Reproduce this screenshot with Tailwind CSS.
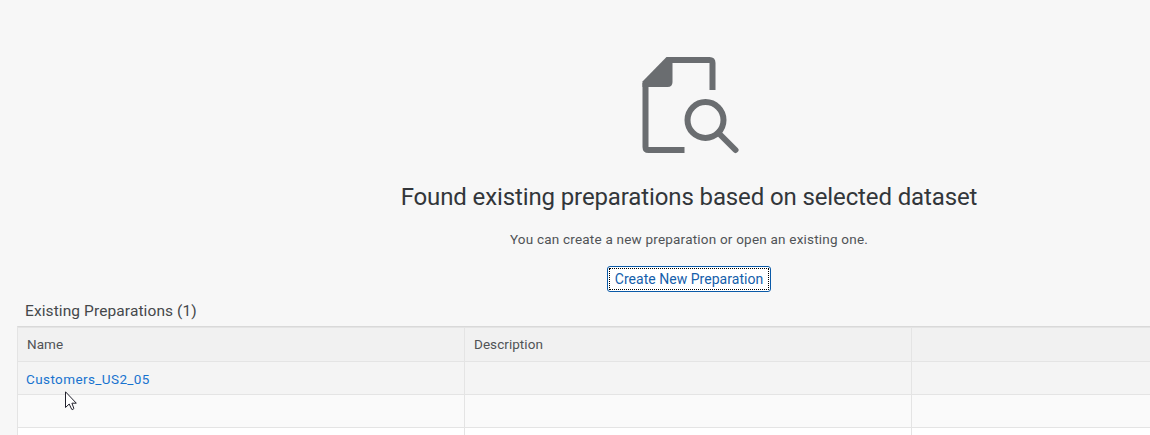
<!DOCTYPE html>
<html lang="en">
<head>
<meta charset="utf-8">
<title>Preparations</title>
<script src="https://cdn.jsdelivr.net/npm/@tailwindcss/browser@4"></script>
</head>
<body class="relative h-[435px] w-[1150px] overflow-hidden bg-[#f7f7f7] font-[Roboto,sans-serif] text-sm text-[#45484b]">
  <section class="ml-[228px] flex w-[922px] flex-col items-center pt-14">
    <svg class="ml-0.5 h-[98px] w-[98px]" viewBox="0 0 98 98" fill="none" stroke="#6a6d70" stroke-width="6">
      <path d="M4.500 27V91Q4.500 94 7.500 94H43.500M26 4H68.500Q71.500 4 71.500 7V34"/>
      <path d="M25.500 1H31.500V26Q31.500 31 26.500 31H1.500V25.500Z" fill="#6a6d70" stroke="none"/>
      <circle cx="64.500" cy="64" r="18"/>
      <path d="M77.500 77L94.500 94" stroke-linecap="round"/>
    </svg>
    <h1 class="mt-[27px] whitespace-nowrap text-2xl leading-8 tracking-[-0.12px] text-[#32363a]">Found existing preparations based on selected dataset</h1>
    <p class="mt-4 whitespace-nowrap text-[13.5px] leading-5 tracking-[0.21px] text-[#505356]">You can create a new preparation or open an existing one.</p>
    <button class="mt-[17px] h-[26px] w-[164px] rounded-[3px] border border-[#0a5aa8] bg-white p-px text-[#1560ab]">
      <span class="flex h-full items-center justify-center whitespace-nowrap border border-dotted border-black text-[14px] tracking-[0.03px]">Create New Preparation</span>
    </button>
  </section>
  <h2 class="mt-[9px] pl-[25px] text-[15.5px] leading-5 tracking-[0.1px]">Existing Preparations (1)</h2>
  <div class="ml-[17px] mt-[5px] h-[109px] w-[1133px] overflow-hidden border-l border-t border-[#e4e4e4] border-t-[#d9d9d9]">
    <div class="grid h-[35px] grid-cols-[447px_447px_1fr] border-b border-t border-[#e4e4e4] bg-[#f1f1f1] text-[13.5px] leading-[33px] tracking-[0.05px] text-[#505356]">
      <div class="border-r border-[#e4e4e4] pl-[9px]">Name</div>
      <div class="border-r border-[#e4e4e4] pl-[9px]">Description</div>
      <div></div>
    </div>
    <div class="grid h-[33px] grid-cols-[447px_447px_1fr] border-b border-[#e4e4e4] bg-[#f4f4f4] text-[13.5px] leading-[34px] tracking-[0.4px]">
      <div class="border-r border-[#e4e4e4] pl-2"><a class="text-[#1873cf]">Customers_US2_05</a></div>
      <div class="border-r border-[#e4e4e4]"></div>
      <div></div>
    </div>
    <div class="grid h-[33px] grid-cols-[447px_447px_1fr] border-b border-[#e4e4e4] bg-[#fafafa]">
      <div class="border-r border-[#e4e4e4]"></div>
      <div class="border-r border-[#e4e4e4]"></div>
      <div></div>
    </div>
    <div class="grid h-[7px] grid-cols-[447px_447px_1fr] bg-white">
      <div class="border-r border-[#e4e4e4]"></div>
      <div class="border-r border-[#e4e4e4]"></div>
      <div></div>
    </div>
  </div>
  <svg class="absolute left-[65px] top-[391px] h-5 w-3" viewBox="0 0 12 20" fill="#fff" stroke="#20202c" stroke-width="1">
    <path d="M.5.8V16.500L4.200 13L6.700 18.300Q8 19 8.900 17.500L6.900 12.200H11.300Z"/>
  </svg>
</body>
</html>
